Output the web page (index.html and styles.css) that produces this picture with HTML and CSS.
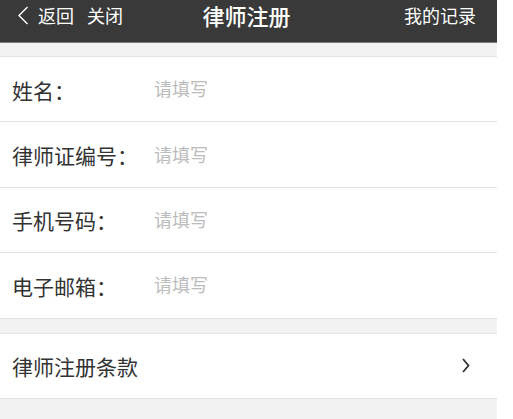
FILE: index.html
```html
<!DOCTYPE html>
<html lang="zh-CN">
<head>
<meta charset="utf-8">
<title>律师注册</title>
<link rel="stylesheet" href="styles.css">
</head>
<body>
<div class="page">
  <header class="topbar">
    <div class="nav-left">
      <svg class="back-icon" width="12" height="19" viewBox="0 0 12 19"><path d="M10.5 1 L2 9.5 L10.5 18" fill="none" stroke="#fff" stroke-width="1.4"/></svg>
      <span class="nav-link">返回</span>
      <span class="nav-link close">关闭</span>
    </div>
    <h1 class="title">律师注册</h1>
    <div class="nav-right">我的记录</div>
  </header>

  <section class="group">
    <label class="row">
      <span class="label">姓名：</span>
      <input class="field" type="text" placeholder="请填写">
    </label>
    <label class="row">
      <span class="label">律师证编号：</span>
      <input class="field" type="text" placeholder="请填写">
    </label>
    <label class="row">
      <span class="label">手机号码：</span>
      <input class="field" type="text" placeholder="请填写">
    </label>
    <label class="row">
      <span class="label">电子邮箱：</span>
      <input class="field" type="text" placeholder="请填写">
    </label>
  </section>

  <section class="group">
    <div class="row link-row">
      <span class="label">律师注册条款</span>
      <svg class="chevron" width="8" height="15" viewBox="0 0 8 15"><path d="M1 1 L6.5 7.5 L1 14" fill="none" stroke="#333" stroke-width="1.8"/></svg>
    </div>
  </section>
</div>
</body>
</html>
```

FILE: styles.css
```css
html, body {
  margin: 0;
  padding: 0;
  background: #fff;
}
body {
  font-family: "Noto Sans CJK SC", "Noto Sans", sans-serif;
  height: 419px;
  overflow: hidden;
}
.page {
  width: 497px;
  min-height: 419px;
  background: #f2f2f2;
  display: flex;
  flex-direction: column;
  gap: 14px;
}
.topbar {
  height: 42px;
  background: #393939;
  border-bottom: 1px solid #7c7c7c;
  display: grid;
  grid-template-columns: 1fr auto 1fr;
  align-items: start;
  padding: 0 21px 0 17px;
  color: #fff;
  margin-bottom: -1px;
}
.nav-left {
  display: flex;
  align-items: center;
  height: 30px;
  justify-self: start;
}
.back-icon {
  margin-right: 9px;
}
.nav-link {
  font-size: 18px;
  line-height: 30px;
}
.nav-link.close {
  margin-left: 13px;
}
.title {
  margin: 0;
  font-size: 22px;
  font-weight: 500;
  line-height: 30px;
  height: 30px;
  text-align: center;
}
.nav-right {
  justify-self: end;
  font-size: 18px;
  line-height: 30px;
}
.group {
  background: #fff;
  border-top: 1px solid #e4e4e4;
}
.row {
  display: flex;
  align-items: center;
  height: 64.4px;
  border-bottom: 1px solid #e4e4e4;
  padding: 0 0 0 12px;
  box-sizing: content-box;
}
.label {
  width: 142px;
  flex: none;
  font-size: 21px;
  color: #333;
  line-height: 1;
  margin-top: 2px;
}
.field {
  flex: 1;
  border: none;
  outline: none;
  background: transparent;
  font-family: inherit;
  font-size: 18px;
  color: #333;
  padding: 0;
  margin: 0 0 2px 0;
}
.field::placeholder {
  color: #bcbcbc;
}
.link-row {
  justify-content: space-between;
  padding-right: 27px;
  height: 64px;
}
.link-row .label {
  width: auto;
}
```
